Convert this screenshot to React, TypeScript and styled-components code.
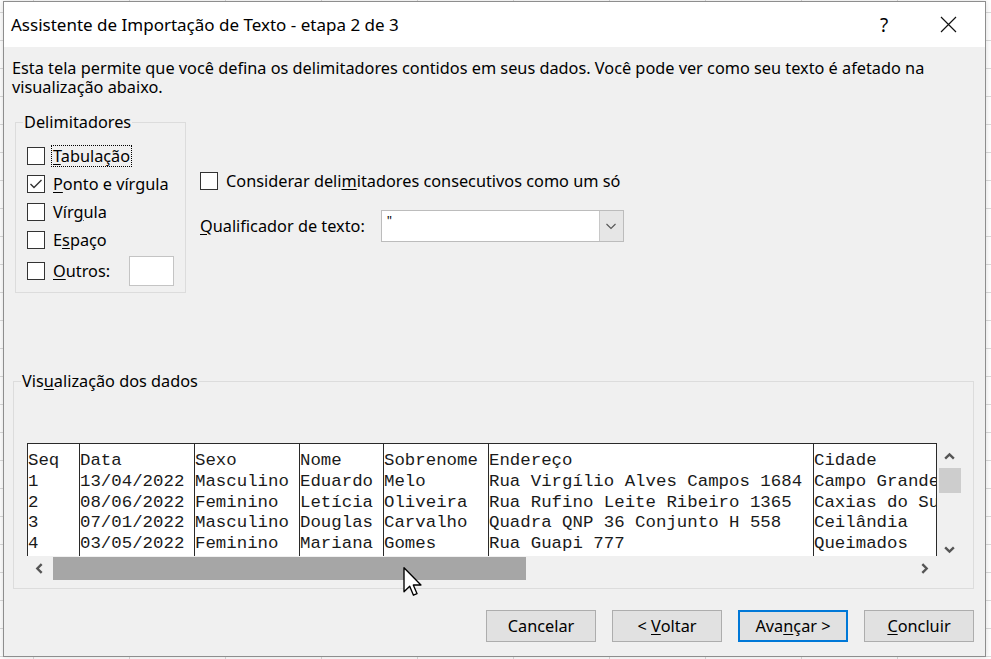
import React from "react";
import styled, { createGlobalStyle } from "styled-components";

const UI = `"Noto Sans", "Open Sans", sans-serif`;
const MONO = `"Liberation Mono", "Courier New", monospace`;

const GlobalStyle = createGlobalStyle`
  html, body { margin: 0; padding: 0; background: #ffffff; }
  body { font-family: ${UI}; color: #000; }
  * { box-sizing: border-box; }
`;

/* Spreadsheet behind the dialog */
const Desktop = styled.div`
  position: relative;
  width: 991px;
  height: 659px;
  overflow: hidden;
  padding: 1px 0 0 3px;
  background-color: #ffffff;
  background-image: linear-gradient(#dadada 1px, transparent 1px),
    linear-gradient(90deg, #dadada 1px, transparent 1px);
  background-size: 96px 28px;
  background-position: 33px 12px;
`;

const Dialog = styled.div`
  width: 983px;
  height: 656px;
  border: 1px solid #8e8e8e;
  background: #f0f0f0;
  display: flex;
  flex-direction: column;
  box-shadow: 0 0 6px rgba(0, 0, 0, 0.15);
`;

const TitleBar = styled.div`
  height: 45px;
  flex: none;
  background: #ffffff;
  display: flex;
  align-items: center;
  padding: 0 5px 0 7px;
`;

const Title = styled.div`
  flex: 1;
  font-size: 17px;
`;

const TitleButton = styled.div`
  width: 64px;
  height: 45px;
  display: flex;
  align-items: center;
  justify-content: center;
  font-size: 19px;
`;

const Body = styled.div`
  flex: 1;
  display: flex;
  flex-direction: column;
  padding: 0 11px 12px 0;
  font-size: 16.3px;
  line-height: 19px;
`;

const Intro = styled.p`
  margin: 12px 0 0 8px;
  line-height: 19px;
`;

const TopSection = styled.div`
  display: flex;
  margin-top: 16px;
`;

const Group = styled.fieldset<{ $width: number; $pad: string; $ml: number }>`
  width: ${(p) => p.$width}px;
  margin: 0 0 0 ${(p) => p.$ml}px;
  padding: ${(p) => p.$pad};
  border: 1px solid #dcdcdc;
  min-width: 0;
`;

const Legend = styled.legend`
  padding: 0 1px;
  line-height: 19px;
`;

const Row = styled.div<{ $h?: number; $mt?: number }>`
  display: flex;
  align-items: center;
  height: ${(p) => p.$h ?? 28}px;
  margin-top: ${(p) => p.$mt ?? 0}px;
  padding-left: 4px;
`;

const Box = styled.span`
  width: 18px;
  height: 18px;
  flex: none;
  border: 1.5px solid #333333;
  background: #ffffff;
  display: flex;
  align-items: center;
  justify-content: center;
`;

const LabelText = styled.span<{ $focus?: boolean }>`
  margin-left: 6px;
  padding: 0 1px;
  border: 1px ${(p) => (p.$focus ? "dotted #000" : "solid transparent")};
  line-height: 20px;
`;

const U = styled.span`
  text-decoration: underline;
  text-underline-offset: 2px;
`;

const SmallInput = styled.div`
  width: 45px;
  height: 30px;
  margin-left: 17px;
  background: #ffffff;
  border: 1px solid #c4c4c4;
`;

const RightColumn = styled.div`
  margin-left: 14px;
  display: flex;
  flex-direction: column;
`;

const OptionRow = styled.div`
  display: flex;
  align-items: center;
  height: 28px;
  margin-top: 54px;
`;

const QualifierRow = styled.div`
  display: flex;
  align-items: center;
  margin-top: 15px;
`;

const Combo = styled.div`
  width: 243px;
  height: 32px;
  margin-left: 16px;
  display: flex;
  background: #ffffff;
  border: 1px solid #bcbcbc;
`;

const ComboValue = styled.div`
  flex: 1;
  padding: 2px 0 0 5px;
  font-size: 13px;
  line-height: 14px;
`;

const ComboButton = styled.div`
  width: 24px;
  background: #e6e6e6;
  border-left: 1px solid #c8c8c8;
  display: flex;
  align-items: center;
  justify-content: center;
`;

const PreviewGroup = styled(Group)`
  margin-top: 79px;
`;

const Preview = styled.div`
  margin-left: 6px;
  display: grid;
  grid-template-columns: 910px 25px;
  grid-template-rows: 113px 24px;
`;

const Sheet = styled.div`
  display: flex;
  overflow: hidden;
  background: #ffffff;
  border-top: 1.5px solid #2a2a2a;
  border-right: 1.5px solid #2a2a2a;
  font-family: ${MONO};
  font-size: 17.4px;
  line-height: 20.8px;
  color: #1a1a1a;
`;

const Column = styled.div<{ $w?: number }>`
  flex: ${(p) => (p.$w ? `0 0 ${p.$w}px` : "1 0 auto")};
  border-left: 1.5px solid #2a2a2a;
  padding-top: 7px;
  white-space: pre;
`;

const VScroll = styled.div`
  display: flex;
  flex-direction: column;
  align-items: center;
  padding-top: 7px;
`;

const VThumb = styled.div`
  width: 22px;
  height: 25px;
  margin: 5px 0 0 1px;
  background: #cdcdcd;
`;

const HScroll = styled.div`
  display: flex;
  align-items: center;
`;

const HThumb = styled.div`
  width: 473px;
  height: 23px;
  margin-left: 7px;
  background: #a6a6a6;
`;

const Spacer = styled.div`
  flex: 1;
`;

const Arrow = styled.span<{ $side: "left" | "right" }>`
  display: flex;
  margin-${(p) => p.$side}: 6px;
`;

const ButtonBar = styled.div`
  display: flex;
  justify-content: flex-end;
  gap: 16px;
  margin-top: 21px;
`;

const Button = styled.div<{ $default?: boolean }>`
  width: 110px;
  height: 32px;
  display: flex;
  align-items: center;
  justify-content: center;
  background: #e1e1e1;
  border: ${(p) => (p.$default ? "2px solid #0078d7" : "1px solid #adadad")};
`;

const Cursor = styled.svg`
  position: absolute;
  left: 403px;
  top: 567px;
`;

const Chevron = ({ dir, size = 13 }: { dir: "up" | "down" | "left" | "right"; size?: number }) => {
  const pts: Record<string, string> = {
    up: "2,8 6,4 10,8",
    down: "2,4 6,8 10,4",
    left: "8,2 4,6 8,10",
    right: "4,2 8,6 4,10",
  };
  return (
    <svg width={size} height={size} viewBox="0 0 12 12">
      <polyline points={pts[dir]} fill="none" stroke="#555" strokeWidth="2.2" />
    </svg>
  );
};

const Check = ({ checked }: { checked?: boolean }) => (
  <Box>
    {checked && (
      <svg width="14" height="14" viewBox="0 0 14 14">
        <polyline points="1.5,7 5,10.5 12.5,3" fill="none" stroke="#333" strokeWidth="1.4" />
      </svg>
    )}
  </Box>
);

const columns: { w?: number; cells: string[] }[] = [
  { w: 52, cells: ["Seq", "1", "2", "3", "4"] },
  { w: 115, cells: ["Data", "13/04/2022", "08/06/2022", "07/01/2022", "03/05/2022"] },
  { w: 105, cells: ["Sexo", "Masculino", "Feminino", "Masculino", "Feminino"] },
  { w: 84, cells: ["Nome", "Eduardo", "Letícia", "Douglas", "Mariana"] },
  { w: 105, cells: ["Sobrenome", "Melo", "Oliveira", "Carvalho", "Gomes"] },
  {
    w: 325,
    cells: [
      "Endereço",
      "Rua Virgílio Alves Campos 1684",
      "Rua Rufino Leite Ribeiro 1365",
      "Quadra QNP 36 Conjunto H 558",
      "Rua Guapi 777",
    ],
  },
  { cells: ["Cidade", "Campo Grande", "Caxias do Sul", "Ceilândia", "Queimados"] },
];

export default function App() {
  return (
    <>
      <GlobalStyle />
      <Desktop>
        <Dialog>
          <TitleBar>
            <Title>Assistente de Importação de Texto - etapa 2 de 3</Title>
            <TitleButton>?</TitleButton>
            <TitleButton>
              <svg width="17" height="17" viewBox="0 0 17 17">
                <path d="M1 1 L16 16 M16 1 L1 16" stroke="#111" strokeWidth="1.2" />
              </svg>
            </TitleButton>
          </TitleBar>
          <Body>
            <Intro>
              Esta tela permite que você defina os delimitadores contidos em seus dados. Você pode ver como seu texto é
              afetado na visualização abaixo.
            </Intro>
            <TopSection>
              <Group $width={171} $pad="10px 6px 6px 7px" $ml={11}>
                <Legend>Delimitadores</Legend>
                <Row>
                  <Check />
                  <LabelText $focus>
                    <U>T</U>abulação
                  </LabelText>
                </Row>
                <Row>
                  <Check checked />
                  <LabelText>
                    <U>P</U>onto e vírgula
                  </LabelText>
                </Row>
                <Row>
                  <Check />
                  <LabelText>
                    Vír<U>g</U>ula
                  </LabelText>
                </Row>
                <Row>
                  <Check />
                  <LabelText>
                    E<U>s</U>paço
                  </LabelText>
                </Row>
                <Row $h={30} $mt={2}>
                  <Check />
                  <LabelText>
                    <U>O</U>utros:
                  </LabelText>
                  <SmallInput />
                </Row>
              </Group>
              <RightColumn>
                <OptionRow>
                  <Check />
                  <LabelText>
                    Considerar deli<U>m</U>itadores consecutivos como um só
                  </LabelText>
                </OptionRow>
                <QualifierRow>
                  <span>
                    <U>Q</U>ualificador de texto:
                  </span>
                  <Combo>
                    <ComboValue>"</ComboValue>
                    <ComboButton>
                      <svg width="12" height="12" viewBox="0 0 12 12">
                        <polyline points="1.5,4 6,8.5 10.5,4" fill="none" stroke="#555" strokeWidth="1.1" />
                      </svg>
                    </ComboButton>
                  </Combo>
                </QualifierRow>
              </RightColumn>
            </TopSection>

            <PreviewGroup $width={961} $pad="52px 7px 8px 7px" $ml={9}>
              <Legend>
                Vis<U>u</U>alização dos dados
              </Legend>
              <Preview>
                <Sheet>
                  {columns.map((c, i) => (
                    <Column key={i} $w={c.w}>
                      {c.cells.map((t, j) => (
                        <div key={j}>{t}</div>
                      ))}
                    </Column>
                  ))}
                </Sheet>
                <VScroll>
                  <Chevron dir="up" />
                  <VThumb />
                  <Spacer />
                  <Chevron dir="down" />
                </VScroll>
                <HScroll>
                  <Arrow $side="left">
                    <Chevron dir="left" />
                  </Arrow>
                  <HThumb />
                  <Spacer />
                  <Arrow $side="right">
                    <Chevron dir="right" />
                  </Arrow>
                </HScroll>
                <div />
              </Preview>
            </PreviewGroup>

            <ButtonBar>
              <Button>Cancelar</Button>
              <Button>
                &lt;&nbsp;<U>V</U>oltar
              </Button>
              <Button $default>
                Ava<U>n</U>çar &gt;
              </Button>
              <Button>
                <U>C</U>oncluir
              </Button>
            </ButtonBar>
          </Body>
        </Dialog>
        <Cursor width="20" height="30" viewBox="0 0 13 20">
          <path d="M0.5 0.5 L0.5 16.5 L4.3 12.8 L6.8 18.8 L9.2 17.8 L6.7 12 L11.8 12 Z" fill="#fff" stroke="#000" strokeWidth="0.9" strokeLinejoin="round" />
        </Cursor>
      </Desktop>
    </>
  );
}
